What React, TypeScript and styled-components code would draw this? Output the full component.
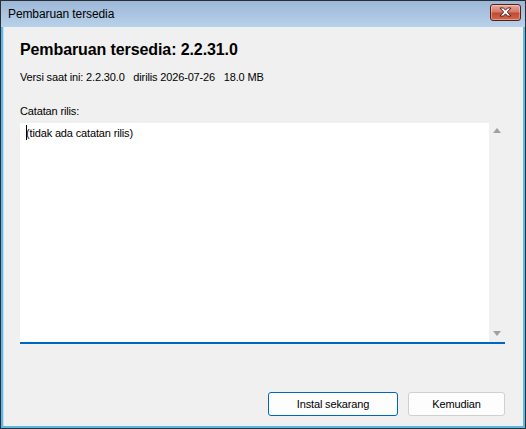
import React from 'react';
import styled, { createGlobalStyle } from 'styled-components';

const GlobalStyle = createGlobalStyle`
  html, body {
    margin: 0;
    padding: 0;
    background: #ffffff;
  }
  body {
    font-family: "Liberation Sans", Arial, sans-serif;
  }
`;

const Window = styled.div`
  width: 526px;
  height: 429px;
  box-sizing: border-box;
  display: flex;
  flex-direction: column;
  border: 1px solid #2a2f36;
  background: #5fb7e6;
  padding: 0 2px 2px 2px;
`;

const TitleBar = styled.div`
  height: 26px;
  flex: none;
  display: flex;
  align-items: center;
  justify-content: space-between;
  margin: 0 -2px;
  padding: 0 4px 0 7px;
  background: linear-gradient(to bottom, #9db8d7 0%, #aac4e1 50%, #b9d2ea 100%);
  font-size: 12px;
  letter-spacing: -0.1px;
  color: #000;
`;

const CloseButton = styled.div`
  width: 31px;
  height: 17px;
  margin-top: -4px;
  box-sizing: border-box;
  border: 1px solid #5a1d16;
  border-radius: 3px;
  background: linear-gradient(to bottom, #e9a99c 0%, #d47a68 45%, #c24a32 55%, #d2684e 100%);
  display: flex;
  align-items: center;
  justify-content: center;
  box-shadow: inset 0 0 0 1px rgba(255, 255, 255, 0.35);
`;

const Client = styled.div`
  flex: 1;
  background: #f0f0f0;
  display: flex;
  flex-direction: column;
  padding: 13px 18px 10px 16px;
  border-left: 1px solid #c8dff2;
  font-size: 11px;
  letter-spacing: -0.15px;
`;

const Heading = styled.h1`
  margin: 0;
  font-size: 16px;
  line-height: 20px;
  letter-spacing: -0.1px;
  font-weight: bold;
  color: #000;
`;

const Meta = styled.div`
  margin-top: 10px;
  line-height: 15px;
  color: #000;
  white-space: pre;
`;

const Label = styled.div`
  margin-top: 19px;
  line-height: 15px;
  color: #000;
`;

const NotesBox = styled.div`
  margin-top: 4px;
  height: 219px;
  display: flex;
  background: #ffffff;
  border-bottom: 2px solid #0067c0;
`;

const NotesText = styled.div`
  flex: 1;
  padding: 2px 6px;
  line-height: 15px;
  color: #000;
`;

const Caret = styled.span`
  display: inline-block;
  width: 1px;
  height: 15px;
  background: #000;
  vertical-align: -3px;
  margin-right: -1px;
`;

const ScrollBar = styled.div`
  width: 16px;
  background: #f0f0f0;
  border-left: 1px solid #ffffff;
  display: flex;
  flex-direction: column;
  justify-content: space-between;
  align-items: center;
  padding: 5px 0 6px;
`;

const Arrow = styled.div<{ $up?: boolean }>`
  width: 0;
  height: 0;
  border-left: 4.5px solid transparent;
  border-right: 4.5px solid transparent;
  ${(p) => (p.$up ? 'border-bottom: 5px solid #a0a0a0;' : 'border-top: 5px solid #a0a0a0;')}
`;

const Footer = styled.div`
  margin-top: auto;
  display: flex;
  justify-content: flex-end;
  gap: 10px;
`;

const Button = styled.button<{ $primary?: boolean; $w: number }>`
  width: ${(p) => p.$w}px;
  height: 24px;
  box-sizing: border-box;
  border-radius: 3px;
  border: 1px solid ${(p) => (p.$primary ? '#0067c0' : '#d0d0d0')};
  background: #fdfdfd;
  font-family: "Liberation Sans", Arial, sans-serif;
  font-size: 11px;
  letter-spacing: -0.15px;
  color: #000;
  padding: 0;
`;

const CloseGlyph = () => (
  <svg width="15" height="10" viewBox="0 0 15 10">
    <path
      d="M2 1 L5.5 1 L7.5 3.2 L9.5 1 L13 1 L9.3 5 L13 9 L9.5 9 L7.5 6.8 L5.5 9 L2 9 L5.7 5 Z"
      fill="#ffffff"
      stroke="#4a1810"
      strokeWidth="0.9"
      strokeLinejoin="round"
    />
  </svg>
);

export default function App() {
  return (
    <>
      <GlobalStyle />
      <Window>
        <TitleBar>
          <span>Pembaruan tersedia</span>
          <CloseButton>
            <CloseGlyph />
          </CloseButton>
        </TitleBar>
        <Client>
          <Heading>Pembaruan tersedia: 2.2.31.0</Heading>
          <Meta>{'Versi saat ini: 2.2.30.0   dirilis 2026-07-26   18.0 MB'}</Meta>
          <Label>Catatan rilis:</Label>
          <NotesBox>
            <NotesText>
              <Caret />
              (tidak ada catatan rilis)
            </NotesText>
            <ScrollBar>
              <Arrow $up />
              <Arrow />
            </ScrollBar>
          </NotesBox>
          <Footer>
            <Button $primary $w={130}>Instal sekarang</Button>
            <Button $w={97}>Kemudian</Button>
          </Footer>
        </Client>
      </Window>
    </>
  );
}
